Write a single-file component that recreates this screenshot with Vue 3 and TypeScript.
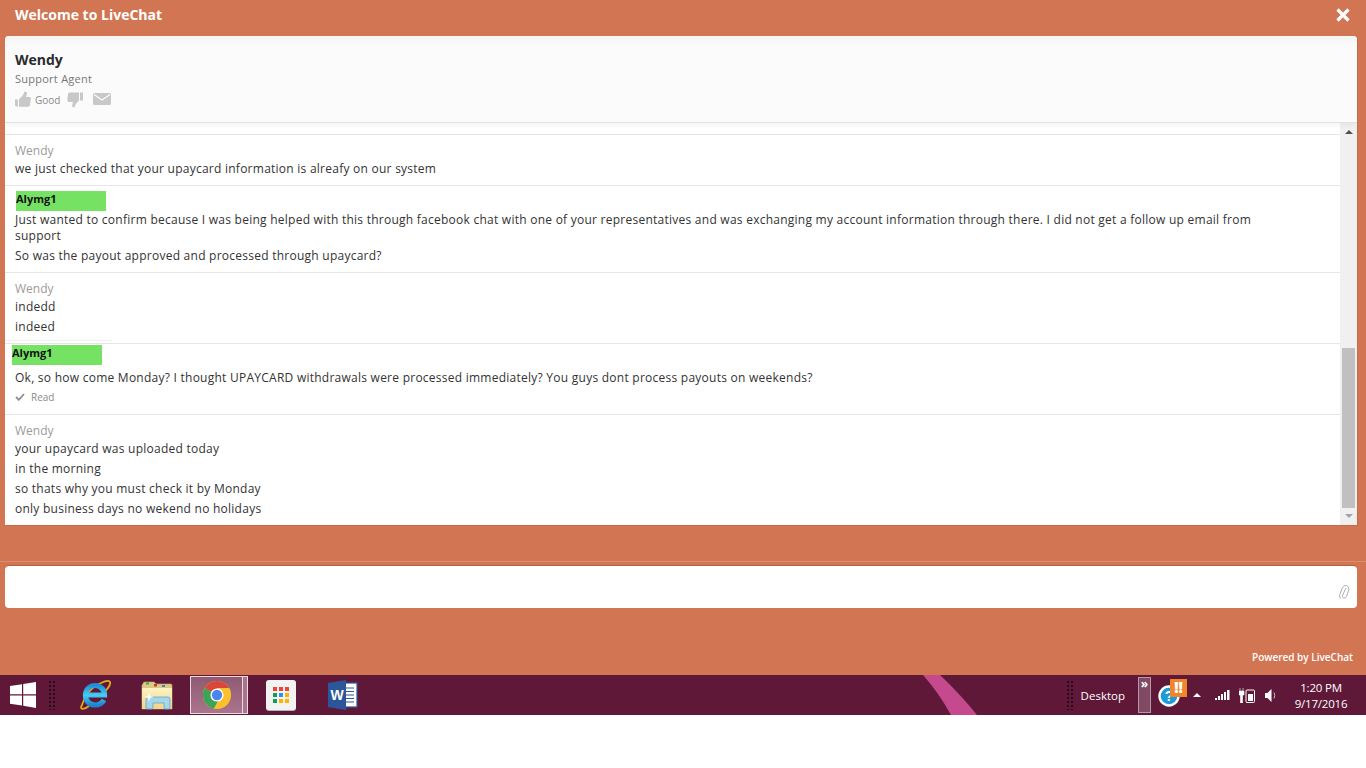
<script setup lang="ts">
interface Fila {
    autor?: string;
    lineas: string[];
    cliente?: boolean;
    desplazado?: boolean;
    leido?: boolean;
}

const filas: Fila[] = [
    { lineas: ["So is my request approved on my account with upaycard"] },
    { autor: "Wendy", lineas: ["we just checked that your upaycard information is alreafy on our system"] },
    {
        autor: "Alymg1",
        cliente: true,
        lineas: [
            "Just wanted to confirm because I was being helped with this through facebook chat with one of your representatives and was exchanging my account information through there. I did not get a follow up email from support",
            "So was the payout approved and processed through upaycard?",
        ],
    },
    { autor: "Wendy", lineas: ["indedd", "indeed"] },
    {
        autor: "Alymg1",
        cliente: true,
        desplazado: true,
        leido: true,
        lineas: ["Ok, so how come Monday? I thought UPAYCARD withdrawals were processed immediately? You guys dont process payouts on weekends?"],
    },
    {
        autor: "Wendy",
        lineas: [
            "your upaycard was uploaded today",
            "in the morning",
            "so thats why you must check it by Monday",
            "only business days no wekend no holidays",
        ],
    },
];

const colores = ["#f44336", "#f44336", "#f44336", "#0f9d58", "#2196f3", "#ffb300", "#0f9d58", "#ffb300", "#ffb300"];
</script>

<template>
    <div class="pagina">
        <div class="ventana">
            <header class="cabecera">
                <span>Welcome to LiveChat</span>
                <svg class="cerrar" viewBox="0 0 14 14" width="14" height="14">
                    <path d="M1.500 1.500 12.500 12.500M12.500 1.500 1.500 12.500" stroke="#fff" stroke-width="3.200" />
                </svg>
            </header>

            <section class="tarjeta">
                <div class="agente">
                    <div class="agente-nombre">Wendy</div>
                    <div class="agente-rol">Support Agent</div>
                    <div class="valorar">
                        <svg class="mano-arriba" viewBox="0 0 16 16" width="16" height="16">
                            <path d="M0 8.500h3v7H1.500Q0 15.500 0 14zM4 8Q8 5.500 9.500 .5 12.500 .5 12 3L11 6H14.500Q16.200 6 15.800 8L15 14Q14.800 15.800 13 15.800H4z" fill="#c8c8c8" />
                        </svg>
                        <span class="good">Good</span>
                        <svg class="mano-abajo" viewBox="0 0 16 16" width="16" height="16">
                            <path d="M2 .5H12V8.500Q8.500 11 7.500 15.500 4.800 15.500 5.200 13L6 10H1.800Q.1 10 .3 8L1 2.200Q1.200 .5 2 .5zM13 .5h3v8h-3z" fill="#c8c8c8" />
                        </svg>
                        <svg class="sobre" viewBox="0 0 18 12" width="18" height="12">
                            <rect width="18" height="12" rx="1.500" fill="#c8c8c8" />
                            <path d="M1 1.500 9 7 17 1.500" fill="none" stroke="#fbfbfb" stroke-width="1.300" />
                        </svg>
                    </div>
                </div>

                <div class="cuerpo">
                    <div class="mensajes">
                        <article
                            v-for="(fila, i) in filas"
                            :key="i"
                            class="fila"
                            :class="{ 'fila-cliente': fila.cliente, 'fila-desplazada': fila.desplazado }"
                        >
                            <div v-if="fila.cliente" class="etiqueta">{{ fila.autor }}</div>
                            <div v-else-if="fila.autor" class="autor">{{ fila.autor }}</div>
                            <p v-for="(linea, n) in fila.lineas" :key="n" class="linea">{{ linea }}</p>
                            <div v-if="fila.leido" class="leido">
                                <svg viewBox="0 0 10 8" width="10" height="8">
                                    <path d="M1 4 3.800 6.800 9 1" fill="none" stroke="#8d8d8d" stroke-width="1.800" />
                                </svg>
                                Read
                            </div>
                        </article>
                    </div>
                    <div class="barra">
                        <i class="flecha-arriba"></i>
                        <div class="pista"><div class="pulgar"></div></div>
                        <i class="flecha-abajo"></i>
                    </div>
                </div>
            </section>

            <div class="separador"></div>

            <div class="redactar">
                <svg class="clip" viewBox="0 0 12 16" width="12" height="16">
                    <path d="M8 4 4.500 11.500Q3.800 13.500 5.500 14T8.500 12.500L10.800 6Q11.500 2.500 8.700 1.600T4.500 3.500L1.800 10.500Q1 13.800 3 14.800" fill="none" stroke="#a7aeb5" stroke-width="1" />
                </svg>
            </div>

            <div class="pie">Powered by LiveChat</div>
        </div>

        <footer class="tareas">
            <svg class="raya" viewBox="0 0 60 40" width="60" height="40">
                <path d="M0 0H17Q38 20 54 40H28Q16 18 0 0Z" fill="#c44a8d" />
            </svg>

            <svg class="inicio" viewBox="0 0 26 26" width="26" height="26">
                <path d="M0 4 12 2.300V12.300H0zM13.200 2.100 26 0V12.300H13.200zM0 13.500H12V23.500L0 21.800zM13.200 13.500H26V26L13.200 23.700z" fill="#fff" />
            </svg>
            <div class="puntos"></div>

            <div class="apps">
                <div class="app">
                    <svg viewBox="0 0 32 32" width="32" height="32">
                        <defs>
                            <linearGradient id="azul-ie" x1="0" y1="0" x2="0" y2="1">
                                <stop offset="0" stop-color="#1f8fd8" />
                                <stop offset="0.5" stop-color="#45cdf5" />
                                <stop offset="1" stop-color="#1a86d0" />
                            </linearGradient>
                            <linearGradient id="crema" x1="0" y1="0" x2="0" y2="1">
                                <stop offset="0" stop-color="#fdf3c4" />
                                <stop offset="1" stop-color="#efd48a" />
                            </linearGradient>
                        </defs>
                        <path d="M3 26C0 31 5 31 10 27M3 26C5 18 12 8 22 4 28 1 32 1 31 5 30.500 8 27 11 25 14" fill="none" stroke="#e2a91a" stroke-width="1.800" />
                        <path d="M6.500 16H25.500C25.500 10 21 6.500 16 6.500 10 6.500 6.500 11 6.500 16.500 6.500 22.500 11 26 16 26 20 26 23 24.500 25 21" fill="none" stroke="url(#azul-ie)" stroke-width="5.200" />
                    </svg>
                </div>
                <div class="app">
                    <svg viewBox="0 0 32 32" width="32" height="32">
                        <path d="M2 5Q2 3 4 3H13L15 5H30Q31 5 31 7V30H1V6z" fill="#e0c987" stroke="#c9ae6a" stroke-width=".6" />
                        <path d="M1 9H31V30H1z" fill="url(#crema)" />
                        <rect x="5" y="3.500" width="3" height="2" fill="#33b34a" />
                        <rect x="13" y="5" width="3" height="2.500" fill="#b5482f" />
                        <rect x="21" y="6" width="3" height="2" fill="#2e8bd0" />
                        <path d="M5 29V20Q5 18 7 18H27Q29 18 29 20V29Q29 30 27.500 30H24.500Q23 30 23 28V24H12V28Q12 30 10.500 30H6.500Q5 30 5 29z" fill="#a4d6ec" stroke="#5a9fc4" stroke-width=".7" />
                        <path d="M8 13 9 17 13 18 9 19 8 23 7 19 3 18 7 17z" fill="#fffdf0" />
                    </svg>
                </div>
                <div class="app activa">
                    <svg viewBox="0 0 32 32" width="30" height="30">
                        <circle cx="16" cy="16" r="15" fill="#fbc02d" />
                        <path d="M16 16 3 8.500A15 15 0 0 1 29 8.500H16z" fill="#d9473b" />
                        <path d="M16 16 3 8.500A15 15 0 0 0 12.500 30.600L19.500 18z" fill="#3ba457" />
                        <circle cx="16" cy="16" r="7" fill="#fff" />
                        <circle cx="16" cy="16" r="5.500" fill="#4c84ee" />
                    </svg>
                </div>
                <div class="app app-rejilla">
                    <div class="rejilla">
                        <i v-for="(color, i) in colores" :key="i" :style="{ background: color }"></i>
                    </div>
                </div>
                <div class="app">
                    <svg viewBox="0 0 32 32" width="32" height="32">
                        <rect x="13" y="4" width="17" height="24" fill="#fff" stroke="#2b579a" stroke-width="1.200" />
                        <path d="M18 9H27M18 12.500H27M18 16H27M18 19.500H27M18 23H27" stroke="#2b579a" stroke-width="1.200" />
                        <path d="M1 4 19 1V31L1 28z" fill="#2b579a" />
                        <text x="10" y="21" text-anchor="middle" class="letra-w">W</text>
                    </svg>
                </div>
            </div>

            <div class="bandeja">
                <div class="puntos"></div>
                <span class="escritorio">Desktop</span>
                <div class="plegar">»</div>
                <div class="ayuda">
                    <svg viewBox="0 0 24 24" width="24" height="24">
                        <circle cx="11" cy="13" r="9.500" fill="#1e9ad6" stroke="#fff" stroke-width="2.400" />
                        <text x="11" y="18" text-anchor="middle" class="letra-q">?</text>
                    </svg>
                    <span class="alerta">!!</span>
                </div>
                <i class="subir"></i>
                <svg class="senal" viewBox="0 0 15 10" width="15" height="10">
                    <path d="M0 8h2v2H0zM3 6h2v4H3zM6 4h2v6H6zM9 2h2v8H9zM12 0h2.500v10H12z" fill="#fff" />
                </svg>
                <svg class="bateria" viewBox="0 0 16 15" width="16" height="15">
                    <path d="M1 0v3M4 0v3M0 3h5v4H3.500v8H1.500V7H0z" fill="#fff" stroke="#fff" stroke-width=".6" />
                    <rect x="7" y="2" width="8.500" height="12.500" rx="1" fill="none" stroke="#fff" />
                    <rect x="9" y="6" width="5" height="7" fill="#fff" />
                </svg>
                <svg class="volumen" viewBox="0 0 12 13" width="12" height="13">
                    <path d="M0 4h2.500L6.500 0V13L2.500 9H0z" fill="#fff" />
                    <path d="M9 3.500Q10.500 6.500 9 9.500" fill="none" stroke="#c9b3bf" />
                </svg>
                <div class="reloj">
                    <span>1:20 PM</span>
                    <span>9/17/2016</span>
                </div>
            </div>
        </footer>
        <div class="blanco"></div>
    </div>
</template>

<style scoped>
.pagina {
    display: flex;
    flex-direction: column;
    width: 1366px;
    height: 768px;
    overflow: hidden;
    background: #fff;
    font-family: "Open Sans", "DejaVu Sans", sans-serif;
}

.ventana {
    display: flex;
    flex-direction: column;
    height: 675px;
    padding: 0 9px 0 5px;
    box-sizing: border-box;
    background: #d27553;
}

.cabecera {
    display: flex;
    align-items: center;
    justify-content: space-between;
    flex: none;
    height: 29px;
    margin-bottom: 7px;
    padding: 0 7px 0 10px;
    color: #fff;
    font-size: 14px;
    font-weight: 700;
}

.tarjeta {
    display: flex;
    flex-direction: column;
    flex: none;
    height: 489px;
    background: #fff;
    border-radius: 4px 4px 0 0;
    overflow: hidden;
    box-shadow: 1px 1px 0 #c9694a;
}

.agente {
    position: relative;
    z-index: 1;
    flex: none;
    height: 87px;
    padding: 14px 10px 0;
    box-sizing: border-box;
    background: linear-gradient(#f4f4f4, #fbfbfb 10px);
    border-bottom: 1px solid #e2e2e2;
    box-shadow: 0 2px 6px rgba(0, 0, 0, 0.05);
}

.agente-nombre {
    color: #2b2b2b;
    font-size: 14px;
    line-height: 20px;
    font-weight: 700;
}

.agente-rol {
    margin-top: 1px;
    color: #777;
    font-size: 11px;
    letter-spacing: 0.25px;
    line-height: 16px;
}

.valorar {
    display: flex;
    align-items: center;
    height: 20px;
    margin-top: 3px;
}

.mano-arriba {
    margin-top: -2px;
}

.good {
    margin-left: 4px;
    color: #8a8a8a;
    font-size: 10px;
}

.mano-abajo {
    margin: 0 0 0 7px;
}

.sobre {
    margin: -3px 0 0 10px;
}

.cuerpo {
    display: flex;
    flex: 1;
    min-height: 0;
}

.mensajes {
    display: flex;
    flex-direction: column;
    justify-content: flex-end;
    flex: 1;
    min-width: 0;
    overflow: hidden;
}

.fila {
    flex: none;
    padding: 6px 60px 4px 10px;
    border-bottom: 1px solid #e6e6e6;
}

.fila:first-child .linea {
    margin-bottom: 6px;
}

.fila:last-child {
    border-bottom: 0;
}

.autor {
    color: #9e9b98;
    font-size: 12px;
    line-height: 20px;
}

.etiqueta {
    width: 90px;
    height: 20px;
    margin-left: 1px;
    color: #111;
    background: #75e264;
    font-size: 11px;
    font-weight: 700;
    line-height: 16px;
}

.linea {
    margin: 0 0 4px;
    color: #333;
    font-size: 12px;
    letter-spacing: 0.25px;
    line-height: 16px;
}

.fila-cliente {
    padding-top: 5px;
}

.fila-cliente .etiqueta {
    margin-bottom: 1px;
}

.fila-desplazada {
    position: relative;
    padding-top: 1px;
}

.fila-desplazada::before {
    content: "";
    position: absolute;
    top: -4px;
    left: 0;
    width: 107px;
    height: 1px;
    background: #f0f0f0;
}

.fila-desplazada .etiqueta {
    margin-left: -3px;
    margin-bottom: 5px;
}

.leido {
    display: flex;
    align-items: center;
    gap: 6px;
    height: 14px;
    margin-bottom: 6px;
    color: #8a8a8a;
    font-size: 10px;
}

.barra {
    display: flex;
    flex-direction: column;
    align-items: center;
    flex: none;
    width: 17px;
    background: #f0f0f0;
}

.flecha-arriba,
.flecha-abajo {
    flex: none;
    width: 0;
    height: 0;
    border-left: 4px solid transparent;
    border-right: 4px solid transparent;
}

.flecha-arriba {
    margin: 7px 0;
    border-bottom: 4px solid #505050;
}

.flecha-abajo {
    margin: 6px 0 7px;
    border-top: 4px solid #a3a3a3;
}

.pista {
    display: flex;
    flex-direction: column;
    justify-content: flex-end;
    flex: 1;
    width: 100%;
}

.pulgar {
    height: 160px;
    margin: 0 2px 0 2px;
    background: #c0c0c0;
}

.separador {
    flex: none;
    height: 1px;
    margin: 36px -9px 4px -5px;
    background: #dc8d6f;
}

.redactar {
    display: flex;
    align-items: flex-end;
    justify-content: flex-end;
    flex: none;
    height: 42px;
    padding: 0 7px 8px 0;
    box-sizing: border-box;
    background: #fff;
    border-radius: 4px;
    box-shadow: 0 -1px 0 #b95f3f;
}

.pie {
    margin-top: auto;
    margin-right: 4px;
    padding-bottom: 11px;
    color: #fff;
    font-size: 10px;
    font-weight: 600;
    line-height: 14px;
    text-align: right;
}

.tareas {
    position: relative;
    display: flex;
    align-items: center;
    flex: none;
    height: 40px;
    background: #5f1838;
    color: #fff;
}

.raya {
    position: absolute;
    left: 923px;
    top: 0;
}

.inicio {
    flex: none;
    margin-left: 10px;
}

.puntos {
    flex: none;
    width: 8px;
    height: 30px;
    margin-left: 12px;
    background-image: radial-gradient(circle, #2a0a1a 1px, transparent 1.200px);
    background-size: 4px 4px;
}

.apps {
    display: flex;
    align-items: center;
    gap: 8px;
    margin-left: 12px;
}

.app {
    display: flex;
    align-items: center;
    justify-content: center;
    flex: none;
    width: 54px;
    height: 40px;
    box-sizing: border-box;
}

.activa {
    width: 53px;
    height: 38px;
    margin-left: -2px;
    border: 1px solid #e9dde3;
    background: linear-gradient(#8f5a72, #a9748c);
    box-shadow: 5px 0 0 -1px #a9748c, 5px 0 0 0 #e9dde3;
}

.app-rejilla {
    margin-left: 3px;
}

.rejilla {
    display: grid;
    grid-template-columns: repeat(3, 4px);
    gap: 2px;
    place-content: center;
    width: 30px;
    height: 30px;
    background: #f2f2f2;
    border-radius: 3px;
    box-shadow: 0 1px 0 #b5b5b5;
}

.rejilla i {
    display: block;
    width: 4px;
    height: 4px;
}

.letra-w,
.letra-q {
    fill: #fff;
    font-family: "Liberation Sans", sans-serif;
    font-size: 14px;
    font-weight: 700;
}

.bandeja {
    display: flex;
    align-items: center;
    margin-left: auto;
    z-index: 1;
}

.escritorio {
    margin-left: 7px;
    font-size: 11.500px;
}

.plegar {
    flex: none;
    width: 13px;
    height: 36px;
    margin-left: 13px;
    box-sizing: border-box;
    background: #7f4a62;
    border: 1px solid #b39aa6;
    font-size: 12px;
    font-weight: 700;
    line-height: 11px;
    text-align: center;
}

.ayuda {
    position: relative;
    flex: none;
    width: 24px;
    height: 24px;
    margin-left: 7px;
}

.alerta {
    position: absolute;
    top: -4px;
    left: 12px;
    width: 17px;
    height: 18px;
    background: #f0862a;
    font-size: 15px;
    font-weight: 800;
    line-height: 17px;
    text-align: center;
}

.subir {
    flex: none;
    width: 0;
    height: 0;
    margin-left: 11px;
    border-left: 4px solid transparent;
    border-right: 4px solid transparent;
    border-bottom: 4px solid #fff;
}

.senal {
    margin-left: 14px;
}

.bateria {
    margin-left: 9px;
}

.volumen {
    margin-left: 10px;
}

.reloj {
    display: flex;
    flex-direction: column;
    align-items: center;
    width: 60px;
    margin: 2px 15px 0 14px;
    font-size: 11.500px;
    letter-spacing: -0.2px;
    line-height: 16px;
}

.blanco {
    flex: 1;
}
</style>

<style>
html,
body {
    margin: 0;
    background: #fff;
}
</style>
